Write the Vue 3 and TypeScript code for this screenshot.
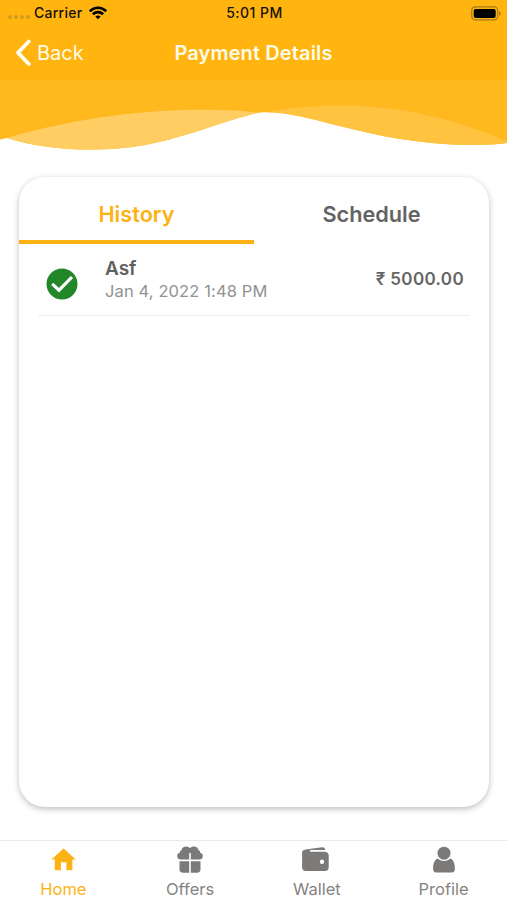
<script setup lang="ts">
import { ref } from 'vue'

interface Payment {
  name: string
  date: string
  amount: string
}

const tabs = ['History', 'Schedule']
const activeTab = ref('History')
const payments: Payment[] = [{ name: 'Asf', date: 'Jan 4, 2022 1:48 PM', amount: '₹ 5000.00' }]
const navItems = ['Home', 'Offers', 'Wallet', 'Profile']
const activeNav = ref('Home')
</script>

<template>
  <div class="screen">
    <header class="header">
      <div class="status">
        <div class="carrier">
          <span class="dots"><i v-for="n in 4" :key="n" /></span>
          <span class="carrier-name">Carrier</span>
          <svg class="wifi" width="20" height="16" viewBox="0 0 20 16">
            <path d="M1.8 6.2C6.5 1.6 13.500 1.600 18.200 6.200" />
            <path d="M4.900 9.300C7.800 6.500 12.200 6.500 15.100 9.300" />
            <path class="core" d="M7.300 11.500C8.900 10.100 11.100 10.100 12.700 11.500L10 14.200Z" />
          </svg>
        </div>
        <span class="time">5:01 PM</span>
        <svg class="battery" width="30" height="15" viewBox="0 0 30 15">
          <rect x=".7" y=".9" width="26" height="13" rx="3.600" fill="none" stroke="#a87a18" stroke-width="1.200" />
          <rect x="2.700" y="2.900" width="22" height="9" rx="2" />
          <path d="M28 5.200Q29.800 6 29.800 7.400T28 9.600Z" fill="#a87a18" />
        </svg>
      </div>
      <div class="titlebar">
        <button class="back">
          <svg width="17" height="28" viewBox="0 0 17 28"><path d="M14.800 2.500L4 13.800L14.800 25" /></svg>
          <span>Back</span>
        </button>
        <h1>Payment Details</h1>
      </div>
    </header>

    <svg class="wave" width="507" height="72" viewBox="0 80 507 72">
      <path fill="#ffb81e" d="M0 80H507V143C480 146.500 445 145 415 141C370 135.500 335 124 303 117C280 112 265 111 253 114C215 124 190 136 145 145C105 152 50 152 7 138L0 139.500Z" />
      <path fill="#ffcd61" d="M7 138C70 119 150 108 215 110Q242 110 258 112.800L253 114C215 124 190 136 145 145C105 152 50 152 7 138Z" />
      <path fill="#ffc340" d="M266 112.500C335 99 420 103 507 141.500V143C480 146.500 445 145 415 141C370 135.500 335 124 303 117C285 113 275 112 266 112.500Z" />
    </svg>

    <main class="card">
      <nav class="tabs">
        <button v-for="tab in tabs" :key="tab" class="tab" :class="{ active: tab === activeTab }" @click="activeTab = tab">
          {{ tab }}
        </button>
      </nav>
      <ul class="payments">
        <li v-for="p in payments" :key="p.date" class="payment">
          <svg class="check" width="32" height="32" viewBox="0 0 32 32">
            <circle cx="16" cy="16" r="15.500" fill="#218728" />
            <path d="M6.200 15.800L13 22.200L26 9" fill="none" stroke="#fff" stroke-width="3.200" />
          </svg>
          <div class="info">
            <span class="name">{{ p.name }}</span>
            <span class="date">{{ p.date }}</span>
          </div>
          <span class="amount">{{ p.amount }}</span>
        </li>
      </ul>
    </main>

    <nav class="bottom">
      <button v-for="item in navItems" :key="item" class="nav-item" :class="{ active: item === activeNav }" @click="activeNav = item">
        <svg width="30" height="30" viewBox="0 0 30 30">
          <path v-if="item === 'Home'" d="M15.600 3.500L27.800 14.500H24.400V24.500Q24.400 25.200 23.700 25.200H18.400V17.200H12.900V25.200H7.500Q6.800 25.200 6.800 24.500V14.500H3.400Z" />
          <template v-else-if="item === 'Offers'">
            <path d="M14.200 14.500H5.500A3.400 3.400 0 0 1 4.800 7.800Q4.400 5.500 6.500 5.200C6.700 1.200 12.400 .2 15 3.100C17.600 .2 23.300 1.200 23.500 5.200Q25.600 5.500 25.200 7.800A3.400 3.400 0 0 1 24.500 14.500H15.800V8H14.200Z" />
            <path d="M4.500 16.300H14.200V27.800H8Q4.500 27.800 4.500 24ZM15.800 16.300H25.500V24Q25.500 27.800 22 27.800H15.800Z" />
          </template>
          <template v-else-if="item === 'Wallet'">
            <path d="M3.200 4.600L19.700 2.200Q22.600 1.900 23 5.100H8.500Q7.500 5.100 7.500 5.800T8.500 6.800H22.700Q26.400 7.200 26.400 10.500V22Q26.400 26 22.700 26H3.400Q-.2 26 -.2 22V8Q-.2 5.100 3.200 4.600Z" transform="translate(.3 0)" />
            <circle cx="20" cy="16.700" r="2.200" fill="#fff" />
          </template>
          <template v-else>
            <circle cx="15" cy="8.200" r="6.500" />
            <path d="M8.500 13.500Q15 18.500 21.500 13.500C25 15 26.500 21 25.700 25.200Q25.300 27.500 22.800 27.500H7.200Q4.700 27.500 4.300 25.200C3.500 21 5 15 8.500 13.500Z" />
          </template>
        </svg>
        <span>{{ item }}</span>
      </button>
    </nav>
  </div>
</template>

<style>
body { background: #fff; }
</style>

<style scoped>
* { box-sizing: border-box; }
.screen {
  width: 507px;
  height: 900px;
  display: flex;
  flex-direction: column;
  overflow: hidden;
  background: #fff;
  font-family: Inter, "Noto Sans", "Liberation Sans", sans-serif;
}
button {
  border: 0;
  padding: 0;
  background: none;
  color: inherit;
  font: inherit;
}
.header {
  flex: none;
  height: 80px;
  background: #ffb40f;
}
.status {
  height: 26px;
  display: grid;
  grid-template-columns: 1fr auto 1fr;
  align-items: center;
  padding: 0 6px 0 8px;
  color: #15100a;
  font-size: 14px;
  font-weight: 500;
}
.carrier { display: flex; align-items: center; }
.dots { display: flex; gap: 2px; width: 26px; padding-top: 7px; }
.dots i { width: 4px; height: 4px; border-radius: 50%; background: #d49b24; }
.carrier-name { width: 54px; padding-bottom: 2px; letter-spacing: .25px; }
.time { padding-bottom: 2px; letter-spacing: .5px; }
.wifi { fill: none; stroke: #000; stroke-width: 2.700; }
.wifi .core { fill: #000; stroke: none; }
.battery { justify-self: end; }
.titlebar {
  height: 53px;
  display: grid;
  grid-template-columns: 1fr auto 1fr;
  align-items: center;
  padding: 0 14px;
  color: #fffbe9;
}
.back { display: flex; align-items: center; gap: 6px; font-size: 20px; }
.back svg { fill: none; stroke: #fffdf4; stroke-width: 3.800; stroke-linecap: round; stroke-linejoin: round; }
h1 { margin: 0; font-size: 20px; font-weight: 600; letter-spacing: .12px; }
.wave { flex: none; display: block; }
.card {
  flex: none;
  width: 470px;
  height: 630px;
  margin: 25px 0 0 19px;
  border-radius: 26px;
  background: #fff;
  box-shadow: 0 2px 6px rgba(0, 0, 0, .26);
  overflow: hidden;
}
.tabs { display: flex; height: 67px; }
.tab {
  flex: 1;
  height: 67px;
  border-bottom: 4px solid transparent;
  padding-top: 11px;
  color: #636363;
  font-size: 21.700px;
  font-weight: 600;
}
.tab.active { color: #fdb214; border-color: #fdb214; }
.payments { margin: 0; padding: 0 19px; list-style: none; }
.payment {
  height: 72px;
  display: flex;
  align-items: center;
  padding: 0 6px 0 8px;
  border-bottom: 1px solid #ededed;
}
.check { margin-top: 9px; }
.info { flex: 1; display: flex; flex-direction: column; padding-left: 27px; }
.name { color: #606060; font-size: 19px; line-height: 22px; font-weight: 600; }
.date { color: #929292; font-size: 16.500px; line-height: 22px; letter-spacing: .12px; }
.amount { padding-bottom: 1px; color: #656565; font-size: 17px; font-weight: 600; letter-spacing: .35px; }
.bottom {
  flex: none;
  height: 60px;
  margin-top: 33px;
  display: flex;
  border-top: 1px solid #e9e9e9;
}
.nav-item {
  flex: 1;
  display: flex;
  flex-direction: column;
  align-items: center;
  padding-top: 4px;
  color: #858381;
  font-size: 16.500px;
}
.nav-item svg { fill: #7c7a78; }
.nav-item span { line-height: 20px; margin-top: 4px; }
.nav-item.active { color: #fdb214; }
.nav-item.active svg { fill: #fdb214; }
</style>
